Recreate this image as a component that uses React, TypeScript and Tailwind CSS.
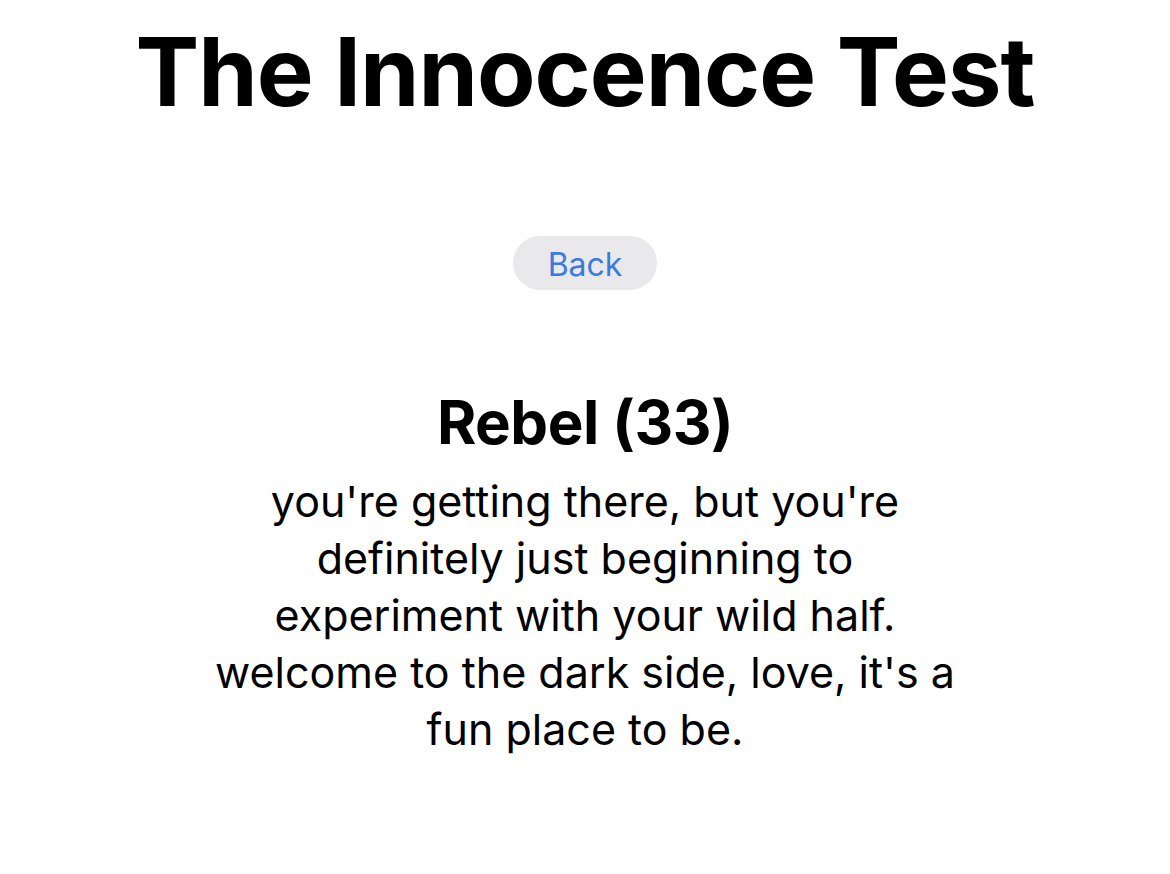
import React from "react";

export default function App() {
  return (
    <div
      className="w-[1170px] h-[874px] bg-white flex flex-col items-center text-black overflow-hidden"
      style={{ fontFamily: "Inter, 'Noto Sans', sans-serif" }}
    >
      <h1 className="mt-[16px] text-[95.5px] leading-[110px] font-bold tracking-[-1px]">
        The Innocence Test
      </h1>
      <button className="mt-[110px] w-[144px] h-[54px] pt-[3px] rounded-full bg-[#e9e9eb] text-[#3a7be0] text-[32px] leading-none flex items-center justify-center">
        Back
      </button>
      <h2 className="mt-[97px] text-[60px] leading-[70px] font-bold tracking-[-0.5px]">
        Rebel (33)
      </h2>
      <p className="mt-[16px] text-[43px] leading-[57px] text-center">
        you're getting there, but you're
        <br />
        definitely just beginning to
        <br />
        experiment with your wild half.
        <br />
        welcome to the dark side, love, it's a
        <br />
        fun place to be.
      </p>
    </div>
  );
}
